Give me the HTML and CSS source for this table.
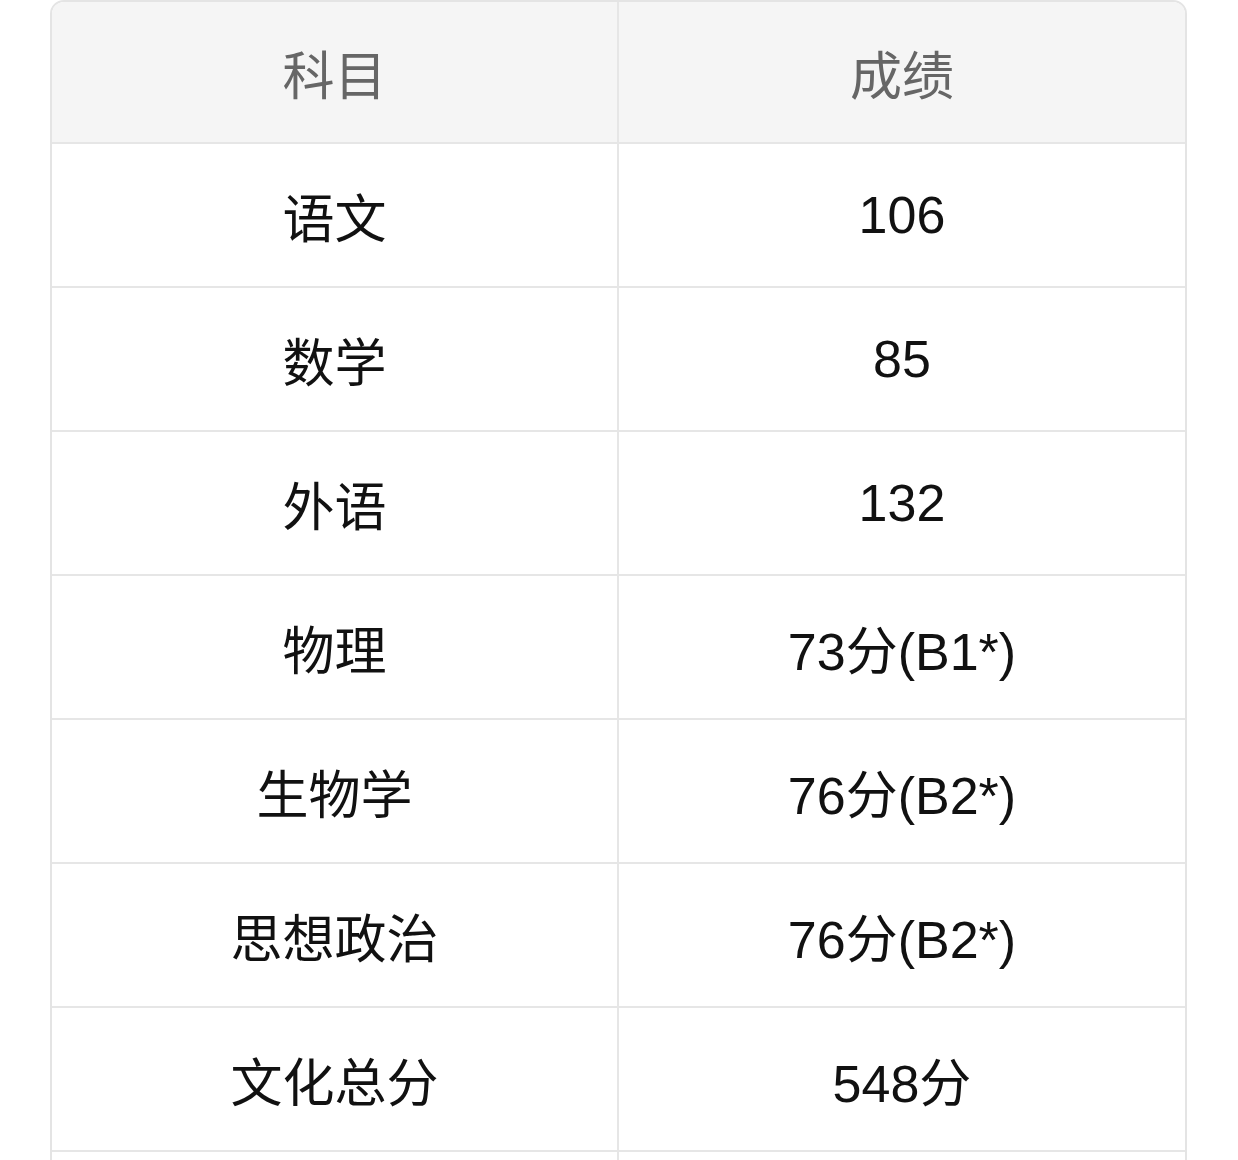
FILE: index.html
```html
<!DOCTYPE html>
<html lang="zh-CN">
<head>
<meta charset="utf-8">
<title>成绩</title>
<link rel="stylesheet" href="styles.css">
</head>
<body>
<div class="score-table">
  <div class="row head">
    <div class="cell">科目</div>
    <div class="cell">成绩</div>
  </div>
  <div class="row">
    <div class="cell">语文</div>
    <div class="cell">106</div>
  </div>
  <div class="row">
    <div class="cell">数学</div>
    <div class="cell">85</div>
  </div>
  <div class="row">
    <div class="cell">外语</div>
    <div class="cell">132</div>
  </div>
  <div class="row">
    <div class="cell">物理</div>
    <div class="cell">73分(B1*)</div>
  </div>
  <div class="row">
    <div class="cell">生物学</div>
    <div class="cell">76分(B2*)</div>
  </div>
  <div class="row">
    <div class="cell">思想政治</div>
    <div class="cell">76分(B2*)</div>
  </div>
  <div class="row">
    <div class="cell">文化总分</div>
    <div class="cell">548分</div>
  </div>
  <div class="row">
    <div class="cell">&nbsp;</div>
    <div class="cell">&nbsp;</div>
  </div>
</div>
</body>
</html>
```

FILE: styles.css
```css
html, body {
  margin: 0;
  padding: 0;
  background: #ffffff;
}

body {
  font-family: "Liberation Sans", "Noto Sans CJK SC", sans-serif;
  height: 1160px;
  overflow: hidden;
}

.score-table {
  margin-left: 50px;
  width: 1137px;
  box-sizing: border-box;
  border: 2px solid #e4e4e4;
  border-radius: 14px;
  overflow: hidden;
}

.row {
  display: grid;
  grid-template-columns: 567px 1fr;
  height: 144px;
  box-sizing: border-box;
  border-bottom: 2px solid #e6e6e6;
}

.row.head {
  height: 142px;
  background: #f5f5f5;
}

.cell {
  display: flex;
  align-items: center;
  justify-content: center;
  font-size: 52px;
  color: #111111;
}

.cell:first-child {
  border-right: 2px solid #e6e6e6;
}

.head .cell {
  color: #666666;
}
```
